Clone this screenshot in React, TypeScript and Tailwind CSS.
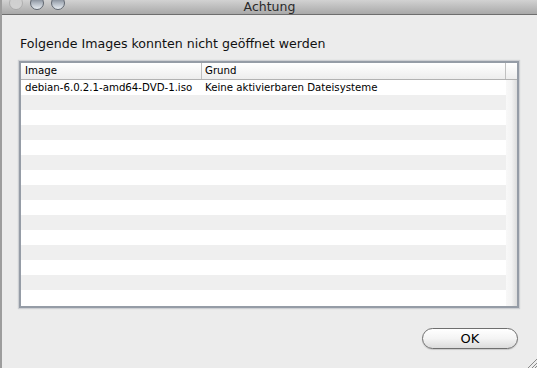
import React from "react";

const rows = Array.from({ length: 15 });

export default function App() {
  const font = { fontFamily: '"DejaVu Sans", "Lucida Grande", sans-serif' };
  return (
    <div
      className="w-[537px] h-[368px] bg-[#ececec] border-l-2 border-[#9d9d9d] overflow-hidden relative flex flex-col"
      style={font}
    >
      {/* title bar */}
      <div className="h-[15px] relative bg-gradient-to-b from-[#d2d2d2] to-[#a9a9a9] border-b border-[#6e6e6e] shrink-0">
        <div className="absolute left-[7px] top-[-4px] flex gap-[7px]">
          <div className="w-[14px] h-[14px] rounded-full bg-gradient-to-b from-[#c9c9c9] to-[#dedede] border border-[#a5a5a5] opacity-70" />
          <div className="w-[14px] h-[14px] rounded-full bg-gradient-to-b from-[#6c7480] via-[#aeb6c0] to-[#e8edf2] border border-[#5f6670]" />
          <div className="w-[14px] h-[14px] rounded-full bg-gradient-to-b from-[#6c7480] via-[#aeb6c0] to-[#e8edf2] border border-[#5f6670]" />
        </div>
        <div className="absolute inset-0 flex justify-center items-start">
          <span className="text-[12.5px] leading-[13px] text-[#2a2a2a]">Achtung</span>
        </div>
      </div>

      <div className="flex flex-col pl-[17px] pr-[16px]">
        <div className="mt-[21px] ml-[1px] text-[12.6px] leading-[16px] text-[#111]">
          Folgende Images konnten nicht geöffnet werden
        </div>

        {/* table */}
        <div className="mt-[9px] w-[500px] h-[247px] border-2 border-[#959ca6] shadow-[0_0_1px_1px_rgba(150,155,165,0.35)] bg-white flex flex-col text-[10.2px] text-black">
          <div className="h-[17px] flex border-b border-[#b2b2b2] bg-gradient-to-b from-white to-[#ededed] shrink-0">
            <div className="w-[181px] border-r border-[#c0c0c0] pl-[4px] leading-[16px]">Image</div>
            <div className="w-[304px] border-r border-[#c0c0c0] pl-[3px] leading-[16px]">Grund</div>
            <div className="flex-1" />
          </div>
          <div className="flex flex-1">
            <div className="flex flex-col w-[485px]">
              {rows.map((_, i) => (
                <div
                  key={i}
                  className={`h-[15px] flex leading-[15px] ${i % 2 === 0 ? "bg-white" : "bg-[#efefef]"}`}
                >
                  {i === 0 && (
                    <>
                      <div className="w-[181px] pl-[4px] whitespace-nowrap">debian-6.0.2.1-amd64-DVD-1.iso</div>
                      <div className="pl-[3px] whitespace-nowrap">Keine aktivierbaren Dateisysteme</div>
                    </>
                  )}
                </div>
              ))}
            </div>
            <div className="flex-1 bg-gradient-to-r from-[#f8f8f8] via-[#f3f3f3] to-[#dcdcdc]" />
          </div>
        </div>

        <div className="flex justify-end mt-[20px] pr-[3px]">
          <button className="w-[96px] h-[21px] rounded-full border border-[#6f6f6f] bg-gradient-to-b from-white via-[#f4f4f4] to-[#dcdcdc] text-[13px] leading-[19px] text-black shadow-[0_1px_1px_rgba(0,0,0,0.15)]">
            OK
          </button>
        </div>
      </div>

      {/* resize grip */}
      <svg className="absolute right-0 bottom-0" width="12" height="12" viewBox="0 0 12 12">
        <line x1="3" y1="12" x2="12" y2="3" stroke="#8a8a8a" strokeWidth="1" />
        <line x1="7" y1="12" x2="12" y2="7" stroke="#8a8a8a" strokeWidth="1" />
        <line x1="10" y1="12" x2="12" y2="10" stroke="#8a8a8a" strokeWidth="1" />
      </svg>
    </div>
  );
}
